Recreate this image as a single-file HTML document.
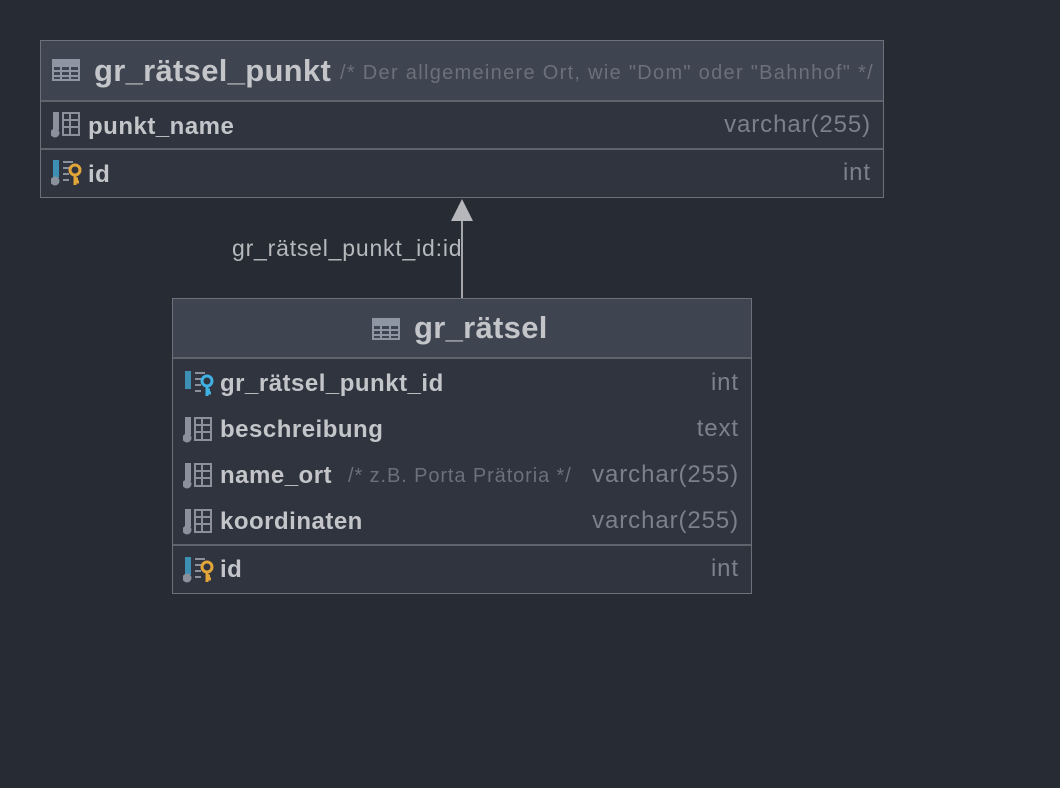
<!DOCTYPE html><html><head><style>
body{margin:0;width:1060px;height:788px;background:#272b34;position:relative;overflow:hidden;font-family:"Liberation Sans","DejaVu Sans",sans-serif;}
.t{position:absolute;background:#2f343f;border:1px solid #6c7079;box-sizing:border-box;}
.h{position:absolute;left:0;right:0;top:0;background:#3e4450;border-bottom:2px solid #5f636b;}
.a{position:absolute;white-space:nowrap;}
.n{color:#c3c5c9;font-weight:bold;font-size:24px;letter-spacing:0.5px;}
.ty{color:#7b808a;font-size:24px;letter-spacing:0.9px;}
.c{color:#6b707a;font-size:20px;letter-spacing:0.9px;}
.sep{position:absolute;left:0;right:0;height:2px;background:#5f636b;}
svg{position:absolute;}
</style></head><body>
<svg width="0" height="0"><defs>
<g id="col"><rect x="2" y="0" width="6" height="18" fill="#8a919c"/><circle cx="4" cy="21" r="4.5" fill="#8a919c"/><g fill="none" stroke="#8a919c" stroke-width="2"><rect x="12" y="1" width="16" height="22"/><path d="M12 8h16M12 15h16M19 1v22"/></g></g>
<g id="pk"><rect x="2" y="0" width="6" height="18" fill="#3d8fb3"/><circle cx="4" cy="21" r="4.5" fill="#8a919c"/><path d="M12 2h10M12 8h6M12 14h6M12 20h6" stroke="#8a919c" stroke-width="2"/><circle cx="24" cy="10" r="5" fill="none" stroke="#e2a53a" stroke-width="3"/><path d="M24 15v10M24 22h4M24 19h3" stroke="#e2a53a" stroke-width="3"/></g>
<g id="fk"><rect x="2" y="0" width="6" height="18" fill="#3d8fb3"/><path d="M12 2h10M12 8h6M12 14h6M12 20h6" stroke="#8a919c" stroke-width="2"/><circle cx="24" cy="10" r="5" fill="none" stroke="#3fb1e3" stroke-width="3"/><path d="M24 15v10M24 22h4M24 19h3" stroke="#3fb1e3" stroke-width="3"/></g>
<g id="tb"><g fill="none" stroke="#8e96a3" stroke-width="2"><rect x="1" y="1" width="26" height="20"/><path d="M1 7h26M1 12h26M1 17h26M9 7v14M18 7v14"/></g><rect x="1" y="1" width="26" height="6" fill="#8e96a3"/></g>
</defs></svg>

<div class="t" style="left:40px;top:40px;width:844px;height:158px;">
<div class="h" style="height:59px;"></div>
<svg style="left:11px;top:18px" width="30" height="24"><use href="#tb"/></svg>
<div class="a" style="left:53px;top:12px;color:#c3c5c9;font-weight:bold;font-size:31px;letter-spacing:0.3px;">gr_rätsel_punkt</div>
<div class="a c" style="left:299px;top:21px;letter-spacing:1.3px;">/* Der allgemeinere Ort, wie "Dom" oder "Bahnhof" */</div>
<svg style="left:10px;top:71px" width="32" height="28"><use href="#col"/></svg>
<div class="a n" style="left:47px;top:72px;">punkt_name</div>
<div class="a ty" style="right:12px;top:70px;">varchar(255)</div>
<div class="sep" style="top:107px"></div>
<svg style="left:10px;top:119px" width="32" height="28"><use href="#pk"/></svg>
<div class="a n" style="left:47px;top:120px;">id</div>
<div class="a ty" style="right:12px;top:118px;">int</div>
</div>

<div style="position:absolute;left:461px;top:218px;width:2px;height:80px;background:#a4a6ab"></div>
<svg style="left:450px;top:198px" width="24" height="24"><path d="M12 1L23 23H1Z" fill="#b5b7bb"/></svg>
<div class="a" style="left:232px;top:235px;color:#b6b8bc;font-size:23px;letter-spacing:0.8px;">gr_rätsel_punkt_id:id</div>

<div class="t" style="left:172px;top:298px;width:580px;height:296px;">
<div class="h" style="height:58px;"></div>
<svg style="left:199px;top:19px" width="30" height="24"><use href="#tb"/></svg>
<div class="a" style="left:241px;top:11px;color:#c3c5c9;font-weight:bold;font-size:31px;letter-spacing:0.3px;">gr_rätsel</div>
<svg style="left:10px;top:72px" width="32" height="28"><use href="#fk"/></svg>
<div class="a n" style="left:47px;top:71px;">gr_rätsel_punkt_id</div>
<div class="a ty" style="right:12px;top:70px;">int</div>
<svg style="left:10px;top:118px" width="32" height="28"><use href="#col"/></svg>
<div class="a n" style="left:47px;top:117px;">beschreibung</div>
<div class="a ty" style="right:12px;top:116px;">text</div>
<svg style="left:10px;top:164px" width="32" height="28"><use href="#col"/></svg>
<div class="a n" style="left:47px;top:163px;">name_ort</div>
<div class="a c" style="left:175px;top:166px;">/* z.B. Porta Prätoria */</div>
<div class="a ty" style="right:12px;top:162px;">varchar(255)</div>
<svg style="left:10px;top:210px" width="32" height="28"><use href="#col"/></svg>
<div class="a n" style="left:47px;top:209px;">koordinaten</div>
<div class="a ty" style="right:12px;top:208px;">varchar(255)</div>
<div class="sep" style="top:245px"></div>
<svg style="left:10px;top:258px" width="32" height="28"><use href="#pk"/></svg>
<div class="a n" style="left:47px;top:257px;">id</div>
<div class="a ty" style="right:12px;top:256px;">int</div>
</div>
</body></html>
